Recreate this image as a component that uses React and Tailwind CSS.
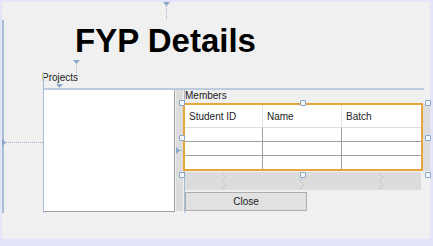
import React from 'react';

const handles = [
  'left-[177px] top-[98px]',
  'left-[298px] top-[98px]',
  'left-[423px] top-[98px]',
  'left-[177px] top-[133px]',
  'left-[423px] top-[133px]',
  'left-[177px] top-[170px]',
  'left-[298px] top-[170px]',
  'left-[423px] top-[170px]',
];

const columns = [
  { name: 'Student ID', width: 'w-[78px]' },
  { name: 'Name', width: 'w-[79px]' },
  { name: 'Batch', width: 'w-[79px]' },
];

const DownAnchor = ({ className, line }) => (
  <div className={`absolute flex flex-col items-center ${className}`}>
    <svg width="7" height="4" viewBox="0 0 7 4">
      <path d="M0 0 H7 L3.5 4 Z" fill="#8ba7c7" />
    </svg>
    {line && <div className={`border-l border-dotted border-[#9fb5cf] ${line}`} />}
  </div>
);

const Zigzag = () => (
  <svg width="7" height="16" viewBox="0 0 7 16">
    <polyline points="1,0 5,4 1,8 5,12 1,16" fill="none" stroke="#c6c6c6" strokeWidth="1" />
  </svg>
);

export default function App() {
  return (
    <div className="w-[433px] h-[246px] bg-[#e4e4fa] pl-[2px] pt-[2px] overflow-hidden font-['Liberation_Sans',Arial,sans-serif]">
      <div className="relative w-[428px] h-[237px] bg-[#f0f0f0]">
        {/* designer guide lines */}
        <div className="absolute left-0 top-[18px] w-[2px] h-[193px] bg-[#a9bdd6]" />
        <div className="absolute left-[41px] top-[70px] w-px h-[141px] bg-[#a9bdd6] z-20" />
        <div className="absolute left-[182px] top-[88px] w-px h-[123px] bg-[#a9bdd6]" />
        <div className="absolute left-[41px] top-[86px] w-[381px] h-[2px] bg-[#bccbdd]" />

        <DownAnchor className="left-[161px] top-0" line="h-[13px]" />
        <DownAnchor className="left-[71px] top-[58px]" line="h-[9px]" />
        <DownAnchor className="left-[54px] top-[82px] z-20" />

        <div className="absolute left-0 top-[137px] flex items-center">
          <svg width="4" height="7" viewBox="0 0 4 7">
            <path d="M0 0 L4 3.5 L0 7 Z" fill="#8ba7c7" />
          </svg>
          <div className="w-[37px] border-t border-dotted border-[#9fb5cf]" />
        </div>
        <div className="absolute left-[174px] top-[145px] flex items-center z-20">
          <svg width="4" height="7" viewBox="0 0 4 7">
            <path d="M0 0 L4 3.5 L0 7 Z" fill="#8ba7c7" />
          </svg>
          <div className="w-[4px] border-t border-dotted border-[#9fb5cf]" />
        </div>

        <h1 className="pt-[22px] pl-[73px] text-[33px] leading-[34px] font-bold text-black">
          FYP Details
        </h1>

        <div className="flex mt-[14px] ml-[40px]">
          <div className="w-[134px] flex flex-col">
            <div className="text-[10px] leading-[12px] text-[#1a1a1a]">Projects</div>
            <div className="mt-[6px] ml-[1px] w-[132px] h-[122px] bg-white border-b border-r border-[#a0a0a0]" />
          </div>

          <div className="w-[7px] mt-[18px] h-[121px] bg-[#dcdcdc]" />

          <div className="flex flex-col mt-[18px]">
            <div className="pl-[2px] text-[10px] leading-[12px] text-[#1a1a1a]">Members</div>
            <div className="flex mt-px">
              <div className="relative z-10 w-[240px] border-2 border-[#e8a53c] bg-white">
                <div className="flex h-[22px]">
                  {columns.map((c, i) => (
                    <div
                      key={c.name}
                      className={`${c.width} flex items-center pl-[4px] text-[10px] text-[#222] ${i < 2 ? 'border-r border-[#e4e4e4]' : ''}`}
                    >
                      {c.name}
                    </div>
                  ))}
                </div>
                {[0, 1, 2].map((r) => (
                  <div
                    key={r}
                    className={`flex h-[14px] border-t ${r === 0 ? 'border-[#dedede]' : 'border-[#9e9e9e]'}`}
                  >
                    {columns.map((c, i) => (
                      <div key={c.name} className={`${c.width} ${i < 2 ? 'border-r border-[#a0a0a0]' : ''}`} />
                    ))}
                  </div>
                ))}
              </div>
              <div className="w-[7px] mt-px bg-[#dcdcdc]" />
            </div>
            <div className="mt-px ml-[2px] w-[236px] h-[18px] bg-[#dcdcdc] flex">
              {columns.map((c) => (
                <div key={c.name} className={`${c.width} flex items-center justify-center`}>
                  <Zigzag />
                </div>
              ))}
            </div>
            <button className="mt-[2px] ml-[2px] w-[122px] h-[19px] bg-[#e1e1e1] border border-[#adadad] text-[10px] text-[#1a1a1a] leading-none">
              Close
            </button>
          </div>
        </div>

        {handles.map((h) => (
          <div key={h} className={`absolute z-30 w-[6px] h-[6px] rounded-[1px] border border-[#8aa5c5] bg-[#f3f7fb] ${h}`} />
        ))}
      </div>
    </div>
  );
}
